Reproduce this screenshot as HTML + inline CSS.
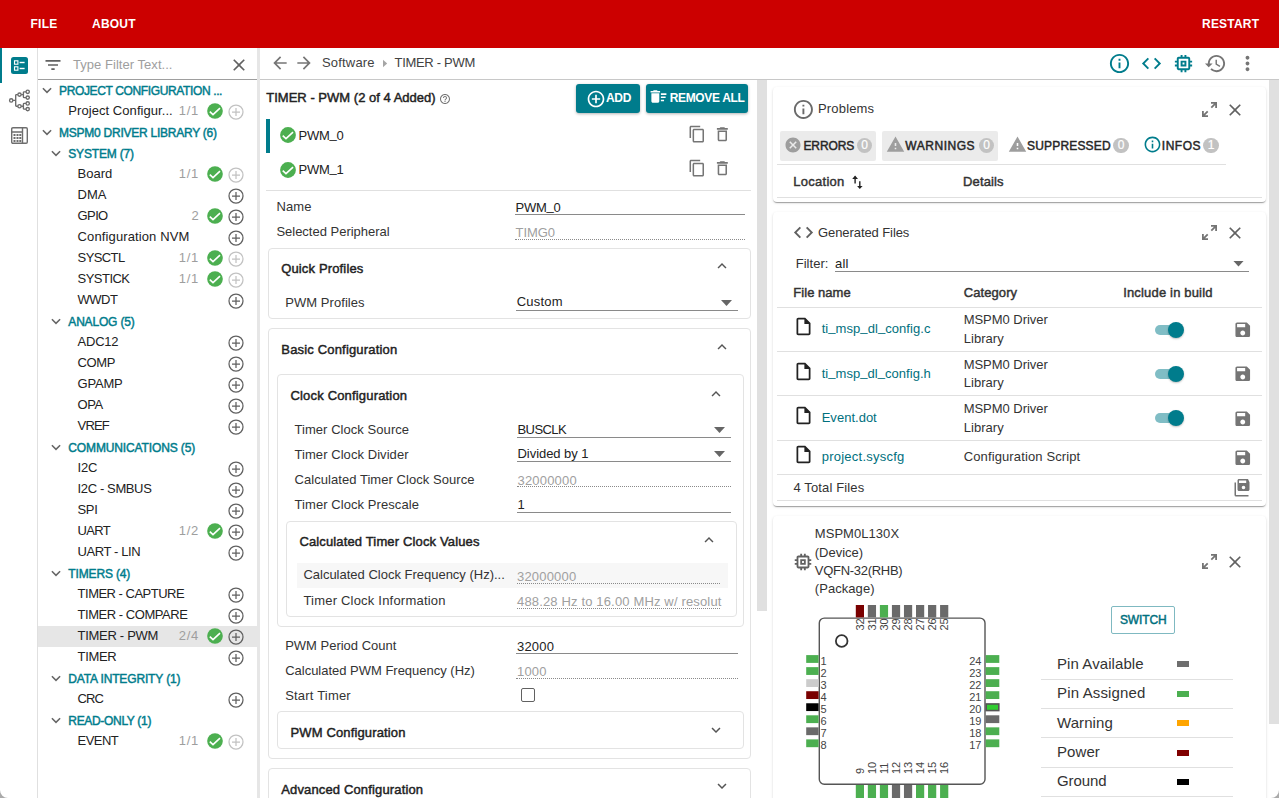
<!DOCTYPE html><html><head><meta charset="utf-8"><style>
html,body{margin:0;padding:0}
body{width:1279px;height:798px;overflow:hidden;position:relative;background:#fff;font-family:"Liberation Sans",sans-serif}
.t{position:absolute;white-space:nowrap;line-height:1}
.b{position:absolute;box-sizing:border-box}
.i{position:absolute;overflow:visible}
</style></head><body>
<div class="b" style="left:0px;top:0px;width:1279px;height:48px;background:#cc0000"></div>
<div class="t" style="left:30.5px;top:17.64px;font-size:12px;color:#fff;font-weight:700;letter-spacing:0.250px;">FILE</div>
<div class="t" style="left:92px;top:17.64px;font-size:12px;color:#fff;font-weight:700;letter-spacing:0.227px;">ABOUT</div>
<div class="t" style="left:1202px;top:17.64px;font-size:12px;color:#fff;font-weight:700;letter-spacing:0.218px;">RESTART</div>
<div class="b" style="left:37px;top:48px;width:1px;height:750px;background:#e0e0e0"></div>
<div class="b" style="left:0px;top:48px;width:2px;height:35px;background:#007c8c"></div>
<svg class="i" style="left:11px;top:57px;width:17px;height:17px" viewBox="0 0 17 17"><rect x="0" y="0" width="17" height="17" rx="2.5" fill="#007c8c"/><rect x="3.5" y="3.8" width="3.4" height="3.4" fill="none" stroke="#fff" stroke-width="1.1"/><rect x="3.5" y="9.8" width="3.4" height="3.4" fill="none" stroke="#fff" stroke-width="1.1"/><rect x="8.6" y="4.8" width="5" height="1.4" fill="#fff"/><rect x="8.6" y="10.8" width="5" height="1.4" fill="#fff"/></svg>
<svg class="i" style="left:9px;top:89px;width:22px;height:23px" viewBox="0 0 22 23" fill="none" stroke="#6a6a6a" stroke-width="1.35"><circle cx="2.2" cy="11.4" r="1.65"/><circle cx="10.5" cy="5.6" r="1.65"/><circle cx="10.5" cy="17.2" r="1.65"/><circle cx="18.7" cy="2.8" r="1.65"/><circle cx="18.7" cy="8.6" r="1.65"/><circle cx="18.7" cy="14.4" r="1.65"/><circle cx="18.7" cy="20.1" r="1.65"/><path d="M3.85 11.4H6.7M6.7 6.3V16.5Q6.7 17.2 7.4 17.2H8.85M6.7 6.3Q6.7 5.6 7.4 5.6H8.85M12.15 5.6H14.4M14.4 3.5V7.9Q14.4 8.6 15.1 8.6H17.05M14.4 3.5Q14.4 2.8 15.1 2.8H17.05M12.15 17.2H14.4M14.4 15.1V19.4Q14.4 20.1 15.1 20.1H17.05M14.4 15.1Q14.4 14.4 15.1 14.4H17.05"/></svg>
<svg class="i" style="left:11px;top:127px;width:17px;height:17px" viewBox="0 0 17 17" fill="none" stroke="#6e6e6e" stroke-width="1.4"><rect x="0.7" y="0.7" width="15.6" height="15.6" rx="1.2"/><path d="M11.5 0.7v15.6M1 5h10.5"/><g fill="#6e6e6e" stroke="none"><rect x="2.5" y="7" width="2" height="2"/><rect x="5.5" y="7" width="2" height="2"/><rect x="8.3" y="7" width="2" height="2"/><rect x="2.5" y="10" width="2" height="2"/><rect x="5.5" y="10" width="2" height="2"/><rect x="8.3" y="10" width="2" height="2"/><rect x="2.5" y="13" width="2" height="2"/><rect x="5.5" y="13" width="2" height="2"/><rect x="8.3" y="13" width="2" height="2"/></g></svg>
<svg class="i" style="left:43px;top:54.5px;width:20px;height:20px" viewBox="0 0 24 24"><path fill="#616161" d="M10 18h4v-2h-4v2zM3 6v2h18V6H3zm3 7h12v-2H6v2z"/></svg>
<div class="t" style="left:73px;top:58.00px;font-size:13px;color:#9e9e9e;letter-spacing:0.039px;">Type Filter Text...</div>
<svg class="i" style="left:229px;top:55px;width:20px;height:20px" viewBox="0 0 24 24"><path fill="#616161" d="M19 6.41L17.590 5 12 10.59 6.41 5 5 6.41 10.59 12 5 17.59 6.41 19 12 13.41 17.59 19 19 17.59 13.41 12z"/></svg>
<div class="b" style="left:38px;top:79px;width:219px;height:1px;background:#9e9e9e"></div>
<div class="b" style="left:257px;top:48px;width:3px;height:750px;background:#e6e6e6"></div>
<svg class="i" style="left:40.6px;top:85px;width:12px;height:10px" viewBox="0 0 12 10"><path d="M1.9 3.3L6 7.4 10.1 3.3" fill="none" stroke="#666" stroke-width="1.55"/></svg>
<div class="t" style="left:59.0px;top:84.84px;font-size:12px;color:#007c8c;-webkit-text-stroke:0.45px #007c8c;letter-spacing:-0.366px;">PROJECT CONFIGURATION ...</div>
<div class="t" style="left:68.3px;top:104.00px;font-size:13px;color:#222;letter-spacing:0.060px;">Project Configur...</div>
<div class="t" style="left:178.70px;top:104.00px;font-size:13px;color:#9e9e9e;letter-spacing:0.742px;">1/1</div>
<svg class="i" style="left:204.9px;top:101.4px;width:20px;height:20px" viewBox="0 0 20 20"><circle cx="10" cy="10" r="7.8" fill="#4caf50"/><path d="M4.80 10.60L8.00 13.60 15.00 7.10" fill="none" stroke="#fff" stroke-width="1.6"/></svg>
<svg class="i" style="left:225.55px;top:101.65px;width:20px;height:20px" viewBox="0 0 20 20"><circle cx="10" cy="10" r="7.0" fill="none" stroke="#c2c2c2" stroke-width="1.25"/><path d="M6 10h8M10 6v8" fill="none" stroke="#c2c2c2" stroke-width="1.25"/></svg>
<svg class="i" style="left:40.6px;top:127px;width:12px;height:10px" viewBox="0 0 12 10"><path d="M1.9 3.3L6 7.4 10.1 3.3" fill="none" stroke="#666" stroke-width="1.55"/></svg>
<div class="t" style="left:59.0px;top:126.84px;font-size:12px;color:#007c8c;-webkit-text-stroke:0.45px #007c8c;letter-spacing:-0.243px;">MSPM0 DRIVER LIBRARY (6)</div>
<svg class="i" style="left:49.900000000000006px;top:148px;width:12px;height:10px" viewBox="0 0 12 10"><path d="M1.9 3.3L6 7.4 10.1 3.3" fill="none" stroke="#666" stroke-width="1.55"/></svg>
<div class="t" style="left:68.3px;top:147.84px;font-size:12px;color:#007c8c;-webkit-text-stroke:0.45px #007c8c;letter-spacing:-0.180px;">SYSTEM (7)</div>
<div class="t" style="left:77.6px;top:167.00px;font-size:13px;color:#222;letter-spacing:0.012px;">Board</div>
<div class="t" style="left:178.70px;top:167.00px;font-size:13px;color:#9e9e9e;letter-spacing:0.742px;">1/1</div>
<svg class="i" style="left:204.9px;top:164.4px;width:20px;height:20px" viewBox="0 0 20 20"><circle cx="10" cy="10" r="7.8" fill="#4caf50"/><path d="M4.80 10.60L8.00 13.60 15.00 7.10" fill="none" stroke="#fff" stroke-width="1.6"/></svg>
<svg class="i" style="left:225.55px;top:164.65px;width:20px;height:20px" viewBox="0 0 20 20"><circle cx="10" cy="10" r="7.0" fill="none" stroke="#c2c2c2" stroke-width="1.25"/><path d="M6 10h8M10 6v8" fill="none" stroke="#c2c2c2" stroke-width="1.25"/></svg>
<div class="t" style="left:77.6px;top:188.00px;font-size:13px;color:#222;letter-spacing:0.014px;">DMA</div>
<svg class="i" style="left:225.55px;top:185.65px;width:20px;height:20px" viewBox="0 0 20 20"><circle cx="10" cy="10" r="7.0" fill="none" stroke="#606060" stroke-width="1.25"/><path d="M6 10h8M10 6v8" fill="none" stroke="#606060" stroke-width="1.25"/></svg>
<div class="t" style="left:77.6px;top:209.00px;font-size:13px;color:#222;letter-spacing:-0.624px;">GPIO</div>
<div class="t" style="left:191.58px;top:209.00px;font-size:13px;color:#9e9e9e;letter-spacing:0.193px;">2</div>
<svg class="i" style="left:204.9px;top:206.4px;width:20px;height:20px" viewBox="0 0 20 20"><circle cx="10" cy="10" r="7.8" fill="#4caf50"/><path d="M4.80 10.60L8.00 13.60 15.00 7.10" fill="none" stroke="#fff" stroke-width="1.6"/></svg>
<svg class="i" style="left:225.55px;top:206.65px;width:20px;height:20px" viewBox="0 0 20 20"><circle cx="10" cy="10" r="7.0" fill="none" stroke="#606060" stroke-width="1.25"/><path d="M6 10h8M10 6v8" fill="none" stroke="#606060" stroke-width="1.25"/></svg>
<div class="t" style="left:77.6px;top:230.00px;font-size:13px;color:#222;letter-spacing:0.119px;">Configuration NVM</div>
<svg class="i" style="left:225.55px;top:227.65px;width:20px;height:20px" viewBox="0 0 20 20"><circle cx="10" cy="10" r="7.0" fill="none" stroke="#606060" stroke-width="1.25"/><path d="M6 10h8M10 6v8" fill="none" stroke="#606060" stroke-width="1.25"/></svg>
<div class="t" style="left:77.6px;top:251.00px;font-size:13px;color:#222;letter-spacing:-0.609px;">SYSCTL</div>
<div class="t" style="left:178.70px;top:251.00px;font-size:13px;color:#9e9e9e;letter-spacing:0.742px;">1/1</div>
<svg class="i" style="left:204.9px;top:248.39999999999998px;width:20px;height:20px" viewBox="0 0 20 20"><circle cx="10" cy="10" r="7.8" fill="#4caf50"/><path d="M4.80 10.60L8.00 13.60 15.00 7.10" fill="none" stroke="#fff" stroke-width="1.6"/></svg>
<svg class="i" style="left:225.55px;top:248.64999999999998px;width:20px;height:20px" viewBox="0 0 20 20"><circle cx="10" cy="10" r="7.0" fill="none" stroke="#c2c2c2" stroke-width="1.25"/><path d="M6 10h8M10 6v8" fill="none" stroke="#c2c2c2" stroke-width="1.25"/></svg>
<div class="t" style="left:77.6px;top:272.00px;font-size:13px;color:#222;letter-spacing:-0.536px;">SYSTICK</div>
<div class="t" style="left:178.70px;top:272.00px;font-size:13px;color:#9e9e9e;letter-spacing:0.742px;">1/1</div>
<svg class="i" style="left:204.9px;top:269.4px;width:20px;height:20px" viewBox="0 0 20 20"><circle cx="10" cy="10" r="7.8" fill="#4caf50"/><path d="M4.80 10.60L8.00 13.60 15.00 7.10" fill="none" stroke="#fff" stroke-width="1.6"/></svg>
<svg class="i" style="left:225.55px;top:269.65px;width:20px;height:20px" viewBox="0 0 20 20"><circle cx="10" cy="10" r="7.0" fill="none" stroke="#c2c2c2" stroke-width="1.25"/><path d="M6 10h8M10 6v8" fill="none" stroke="#c2c2c2" stroke-width="1.25"/></svg>
<div class="t" style="left:77.6px;top:293.00px;font-size:13px;color:#222;letter-spacing:-0.515px;">WWDT</div>
<svg class="i" style="left:225.55px;top:290.65px;width:20px;height:20px" viewBox="0 0 20 20"><circle cx="10" cy="10" r="7.0" fill="none" stroke="#606060" stroke-width="1.25"/><path d="M6 10h8M10 6v8" fill="none" stroke="#606060" stroke-width="1.25"/></svg>
<svg class="i" style="left:49.900000000000006px;top:316px;width:12px;height:10px" viewBox="0 0 12 10"><path d="M1.9 3.3L6 7.4 10.1 3.3" fill="none" stroke="#666" stroke-width="1.55"/></svg>
<div class="t" style="left:68.3px;top:315.84px;font-size:12px;color:#007c8c;-webkit-text-stroke:0.45px #007c8c;letter-spacing:-0.174px;">ANALOG (5)</div>
<div class="t" style="left:77.6px;top:335.00px;font-size:13px;color:#222;letter-spacing:-0.236px;">ADC12</div>
<svg class="i" style="left:225.55px;top:332.65px;width:20px;height:20px" viewBox="0 0 20 20"><circle cx="10" cy="10" r="7.0" fill="none" stroke="#606060" stroke-width="1.25"/><path d="M6 10h8M10 6v8" fill="none" stroke="#606060" stroke-width="1.25"/></svg>
<div class="t" style="left:77.6px;top:356.00px;font-size:13px;color:#222;letter-spacing:-0.363px;">COMP</div>
<svg class="i" style="left:225.55px;top:353.65px;width:20px;height:20px" viewBox="0 0 20 20"><circle cx="10" cy="10" r="7.0" fill="none" stroke="#606060" stroke-width="1.25"/><path d="M6 10h8M10 6v8" fill="none" stroke="#606060" stroke-width="1.25"/></svg>
<div class="t" style="left:77.6px;top:377.00px;font-size:13px;color:#222;letter-spacing:-0.214px;">GPAMP</div>
<svg class="i" style="left:225.55px;top:374.65px;width:20px;height:20px" viewBox="0 0 20 20"><circle cx="10" cy="10" r="7.0" fill="none" stroke="#606060" stroke-width="1.25"/><path d="M6 10h8M10 6v8" fill="none" stroke="#606060" stroke-width="1.25"/></svg>
<div class="t" style="left:77.6px;top:398.00px;font-size:13px;color:#222;letter-spacing:-0.448px;">OPA</div>
<svg class="i" style="left:225.55px;top:395.65px;width:20px;height:20px" viewBox="0 0 20 20"><circle cx="10" cy="10" r="7.0" fill="none" stroke="#606060" stroke-width="1.25"/><path d="M6 10h8M10 6v8" fill="none" stroke="#606060" stroke-width="1.25"/></svg>
<div class="t" style="left:77.6px;top:419.00px;font-size:13px;color:#222;letter-spacing:-0.828px;">VREF</div>
<svg class="i" style="left:225.55px;top:416.65px;width:20px;height:20px" viewBox="0 0 20 20"><circle cx="10" cy="10" r="7.0" fill="none" stroke="#606060" stroke-width="1.25"/><path d="M6 10h8M10 6v8" fill="none" stroke="#606060" stroke-width="1.25"/></svg>
<svg class="i" style="left:49.900000000000006px;top:442px;width:12px;height:10px" viewBox="0 0 12 10"><path d="M1.9 3.3L6 7.4 10.1 3.3" fill="none" stroke="#666" stroke-width="1.55"/></svg>
<div class="t" style="left:68.3px;top:441.84px;font-size:12px;color:#007c8c;-webkit-text-stroke:0.45px #007c8c;letter-spacing:-0.127px;">COMMUNICATIONS (5)</div>
<div class="t" style="left:77.6px;top:461.00px;font-size:13px;color:#222;letter-spacing:-0.206px;">I2C</div>
<svg class="i" style="left:225.55px;top:458.65px;width:20px;height:20px" viewBox="0 0 20 20"><circle cx="10" cy="10" r="7.0" fill="none" stroke="#606060" stroke-width="1.25"/><path d="M6 10h8M10 6v8" fill="none" stroke="#606060" stroke-width="1.25"/></svg>
<div class="t" style="left:77.6px;top:482.00px;font-size:13px;color:#222;letter-spacing:-0.381px;">I2C - SMBUS</div>
<svg class="i" style="left:225.55px;top:479.65px;width:20px;height:20px" viewBox="0 0 20 20"><circle cx="10" cy="10" r="7.0" fill="none" stroke="#606060" stroke-width="1.25"/><path d="M6 10h8M10 6v8" fill="none" stroke="#606060" stroke-width="1.25"/></svg>
<div class="t" style="left:77.6px;top:503.00px;font-size:13px;color:#222;letter-spacing:-0.395px;">SPI</div>
<svg class="i" style="left:225.55px;top:500.65px;width:20px;height:20px" viewBox="0 0 20 20"><circle cx="10" cy="10" r="7.0" fill="none" stroke="#606060" stroke-width="1.25"/><path d="M6 10h8M10 6v8" fill="none" stroke="#606060" stroke-width="1.25"/></svg>
<div class="t" style="left:77.6px;top:524.00px;font-size:13px;color:#222;letter-spacing:-0.653px;">UART</div>
<div class="t" style="left:178.70px;top:524.00px;font-size:13px;color:#9e9e9e;letter-spacing:0.742px;">1/2</div>
<svg class="i" style="left:204.9px;top:521.4px;width:20px;height:20px" viewBox="0 0 20 20"><circle cx="10" cy="10" r="7.8" fill="#4caf50"/><path d="M4.80 10.60L8.00 13.60 15.00 7.10" fill="none" stroke="#fff" stroke-width="1.6"/></svg>
<svg class="i" style="left:225.55px;top:521.65px;width:20px;height:20px" viewBox="0 0 20 20"><circle cx="10" cy="10" r="7.0" fill="none" stroke="#606060" stroke-width="1.25"/><path d="M6 10h8M10 6v8" fill="none" stroke="#606060" stroke-width="1.25"/></svg>
<div class="t" style="left:77.6px;top:545.00px;font-size:13px;color:#222;letter-spacing:-0.408px;">UART - LIN</div>
<svg class="i" style="left:225.55px;top:542.65px;width:20px;height:20px" viewBox="0 0 20 20"><circle cx="10" cy="10" r="7.0" fill="none" stroke="#606060" stroke-width="1.25"/><path d="M6 10h8M10 6v8" fill="none" stroke="#606060" stroke-width="1.25"/></svg>
<svg class="i" style="left:49.900000000000006px;top:568px;width:12px;height:10px" viewBox="0 0 12 10"><path d="M1.9 3.3L6 7.4 10.1 3.3" fill="none" stroke="#666" stroke-width="1.55"/></svg>
<div class="t" style="left:68.3px;top:567.84px;font-size:12px;color:#007c8c;-webkit-text-stroke:0.45px #007c8c;letter-spacing:-0.140px;">TIMERS (4)</div>
<div class="t" style="left:77.6px;top:587.00px;font-size:13px;color:#222;letter-spacing:-0.508px;">TIMER - CAPTURE</div>
<svg class="i" style="left:225.55px;top:584.65px;width:20px;height:20px" viewBox="0 0 20 20"><circle cx="10" cy="10" r="7.0" fill="none" stroke="#606060" stroke-width="1.25"/><path d="M6 10h8M10 6v8" fill="none" stroke="#606060" stroke-width="1.25"/></svg>
<div class="t" style="left:77.6px;top:608.00px;font-size:13px;color:#222;letter-spacing:-0.465px;">TIMER - COMPARE</div>
<svg class="i" style="left:225.55px;top:605.65px;width:20px;height:20px" viewBox="0 0 20 20"><circle cx="10" cy="10" r="7.0" fill="none" stroke="#606060" stroke-width="1.25"/><path d="M6 10h8M10 6v8" fill="none" stroke="#606060" stroke-width="1.25"/></svg>
<div class="b" style="left:38px;top:626px;width:219px;height:21px;background:#e6e6e6"></div>
<div class="t" style="left:77.6px;top:629.00px;font-size:13px;color:#222;letter-spacing:-0.302px;">TIMER - PWM</div>
<div class="t" style="left:178.70px;top:629.00px;font-size:13px;color:#9e9e9e;letter-spacing:0.742px;">2/4</div>
<svg class="i" style="left:204.9px;top:626.4px;width:20px;height:20px" viewBox="0 0 20 20"><circle cx="10" cy="10" r="7.8" fill="#4caf50"/><path d="M4.80 10.60L8.00 13.60 15.00 7.10" fill="none" stroke="#fff" stroke-width="1.6"/></svg>
<svg class="i" style="left:225.55px;top:626.65px;width:20px;height:20px" viewBox="0 0 20 20"><circle cx="10" cy="10" r="7.0" fill="none" stroke="#606060" stroke-width="1.25"/><path d="M6 10h8M10 6v8" fill="none" stroke="#606060" stroke-width="1.25"/></svg>
<div class="t" style="left:77.6px;top:650.00px;font-size:13px;color:#222;letter-spacing:-0.358px;">TIMER</div>
<svg class="i" style="left:225.55px;top:647.65px;width:20px;height:20px" viewBox="0 0 20 20"><circle cx="10" cy="10" r="7.0" fill="none" stroke="#606060" stroke-width="1.25"/><path d="M6 10h8M10 6v8" fill="none" stroke="#606060" stroke-width="1.25"/></svg>
<svg class="i" style="left:49.900000000000006px;top:673px;width:12px;height:10px" viewBox="0 0 12 10"><path d="M1.9 3.3L6 7.4 10.1 3.3" fill="none" stroke="#666" stroke-width="1.55"/></svg>
<div class="t" style="left:68.3px;top:672.84px;font-size:12px;color:#007c8c;-webkit-text-stroke:0.45px #007c8c;letter-spacing:-0.145px;">DATA INTEGRITY (1)</div>
<div class="t" style="left:77.6px;top:692.00px;font-size:13px;color:#222;letter-spacing:-0.944px;">CRC</div>
<svg class="i" style="left:225.55px;top:689.65px;width:20px;height:20px" viewBox="0 0 20 20"><circle cx="10" cy="10" r="7.0" fill="none" stroke="#606060" stroke-width="1.25"/><path d="M6 10h8M10 6v8" fill="none" stroke="#606060" stroke-width="1.25"/></svg>
<svg class="i" style="left:49.900000000000006px;top:715px;width:12px;height:10px" viewBox="0 0 12 10"><path d="M1.9 3.3L6 7.4 10.1 3.3" fill="none" stroke="#666" stroke-width="1.55"/></svg>
<div class="t" style="left:68.3px;top:714.84px;font-size:12px;color:#007c8c;-webkit-text-stroke:0.45px #007c8c;letter-spacing:-0.319px;">READ-ONLY (1)</div>
<div class="t" style="left:77.6px;top:734.00px;font-size:13px;color:#222;letter-spacing:-0.560px;">EVENT</div>
<div class="t" style="left:178.70px;top:734.00px;font-size:13px;color:#9e9e9e;letter-spacing:0.742px;">1/1</div>
<svg class="i" style="left:204.9px;top:731.4px;width:20px;height:20px" viewBox="0 0 20 20"><circle cx="10" cy="10" r="7.8" fill="#4caf50"/><path d="M4.80 10.60L8.00 13.60 15.00 7.10" fill="none" stroke="#fff" stroke-width="1.6"/></svg>
<svg class="i" style="left:225.55px;top:731.65px;width:20px;height:20px" viewBox="0 0 20 20"><circle cx="10" cy="10" r="7.0" fill="none" stroke="#c2c2c2" stroke-width="1.25"/><path d="M6 10h8M10 6v8" fill="none" stroke="#c2c2c2" stroke-width="1.25"/></svg>
<div class="b" style="left:260px;top:79px;width:1019px;height:1px;background:#c8c8c8"></div>
<svg class="i" style="left:270px;top:53px;width:20px;height:20px" viewBox="0 0 24 24"><path fill="#757575" d="M20 11H7.83l5.59-5.59L12 4l-8 8 8 8 1.41-1.41L7.83 13H20v-2z"/></svg>
<svg class="i" style="left:294px;top:53px;width:20px;height:20px" viewBox="0 0 24 24"><path fill="#757575" d="M12 4l-1.41 1.41L16.17 11H4v2h12.170l-5.58 5.590L12 20l8-8z"/></svg>
<div class="t" style="left:322px;top:55.80px;font-size:13px;color:#424242;letter-spacing:0.182px;">Software</div>
<svg class="i" style="left:382px;top:59px;width:6px;height:9px" viewBox="382 59 6 9"><path fill="#a6a6a6" d="M383 59.7L387.2 63.45 383 67.2z"/></svg>
<div class="t" style="left:394.5px;top:55.80px;font-size:13px;color:#424242;letter-spacing:-0.302px;">TIMER - PWM</div>
<svg class="i" style="left:1108px;top:52px;width:23px;height:23px" viewBox="0 0 24 24"><path fill="#007c8c" d="M11 7h2v2h-2zm0 4h2v6h-2zm1-9C6.48 2 2 6.48 2 12s4.48 10 10 10 10-4.48 10-10S17.52 2 12 2zm0 18c-4.41 0-8-3.59-8-8s3.59-8 8-8 8 3.59 8 8-3.59 8-8 8z"/></svg>
<svg class="i" style="left:1140px;top:52px;width:23px;height:23px" viewBox="0 0 24 24"><path fill="#007c8c" d="M9.4 16.6L4.8 12l4.6-4.6L8 6l-6 6 6 6 1.4-1.4zm5.2 0l4.6-4.6-4.6-4.6L16 6l6 6-6 6-1.4-1.4z"/></svg>
<svg class="i" style="left:1172px;top:52px;width:23px;height:23px" viewBox="0 0 24 24"><path fill="#007c8c" d="M15 9H9v6h6V9zm-2 4h-2v-2h2v2zm8-2V9h-2V7c0-1.1-.9-2-2-2h-2V3h-2v2h-2V3H9v2H7c-1.1 0-2 .9-2 2v2H3v2h2v2H3v2h2v2c0 1.1.9 2 2 2h2v2h2v-2h2v2h2v-2h2c1.1 0 2-.9 2-2v-2h2v-2h-2v-2h2zm-4 6H7V7h10v10z"/></svg>
<svg class="i" style="left:1204px;top:52px;width:23px;height:23px" viewBox="0 0 24 24"><path fill="#757575" d="M13 3c-4.97 0-9 4.03-9 9H1l3.89 3.89.07.14L9 12H6c0-3.870 3.13-7 7-7s7 3.13 7 7-3.13 7-7 7c-1.93 0-3.68-.79-4.94-2.06l-1.42 1.42C8.27 19.99 10.51 21 13 21c4.97 0 9-4.03 9-9s-4.03-9-9-9zm-1 5v5l4.28 2.54.72-1.21-3.5-2.08V8H12z"/></svg>
<svg class="i" style="left:1236px;top:52px;width:23px;height:23px" viewBox="0 0 24 24"><path fill="#757575" d="M12 8c1.1 0 2-.9 2-2s-.9-2-2-2-2 .9-2 2 .9 2 2 2zm0 2c-1.1 0-2 .9-2 2s.9 2 2 2 2-.9 2-2-.9-2-2-2zm0 6c-1.1 0-2 .9-2 2s.9 2 2 2 2-.9 2-2-.9-2-2-2z"/></svg>
<div class="b" style="left:757px;top:80px;width:10px;height:531px;background:#e0e0e0"></div>
<div class="b" style="left:1269px;top:80px;width:10px;height:644px;background:#e0e0e0"></div>
<div class="t" style="left:266.25px;top:90.50px;font-size:13px;color:#222;-webkit-text-stroke:0.45px #222;letter-spacing:0.015px;">TIMER - PWM (2 of 4 Added)</div>
<svg class="i" style="left:439px;top:93px;width:12px;height:12px" viewBox="0 0 24 24"><path fill="#757575" d="M11 18h2v-2h-2v2zm1-16C6.48 2 2 6.48 2 12s4.48 10 10 10 10-4.48 10-10S17.52 2 12 2zm0 18c-4.41 0-8-3.59-8-8s3.59-8 8-8 8 3.59 8 8-3.59 8-8 8zm0-14c-2.21 0-4 1.79-4 4h2c0-1.1.9-2 2-2s2 .9 2 2c0 2-3 1.75-3 5h2c0-2.25 3-2.5 3-5 0-2.21-1.79-4-4-4z"/></svg>
<div class="b" style="left:576px;top:84px;width:64px;height:29px;background:#007c8c;border-radius:3px;box-shadow:0 1px 3px rgba(0,0,0,.3)"></div>
<div class="b" style="left:646px;top:84px;width:102px;height:29px;background:#007c8c;border-radius:3px;box-shadow:0 1px 3px rgba(0,0,0,.3)"></div>
<svg class="i" style="left:585.5px;top:88.5px;width:20px;height:20px" viewBox="0 0 24 24"><path fill="#fff" d="M13 7h-2v4H7v2h4v4h2v-4h4v-2h-4V7zm-1-5C6.48 2 2 6.48 2 12s4.48 10 10 10 10-4.48 10-10S17.52 2 12 2zm0 18c-4.41 0-8-3.59-8-8s3.59-8 8-8 8 3.59 8 8-3.59 8-8 8z"/></svg>
<div class="t" style="left:606px;top:91.64px;font-size:12px;color:#fff;font-weight:700;letter-spacing:-0.333px;">ADD</div>
<svg class="i" style="left:648.5px;top:87px;width:19px;height:19px" viewBox="0 0 24 24"><path fill="#fff" d="M15 16h4v2h-4zm0-8h7v2h-7zm0 4h6v2h-6zM3 18c0 1.1.9 2 2 2h6c1.1 0 2-.9 2-2V8H3v10zM14 5h-3l-1-1H6L5 5H2v2h12z"/></svg>
<div class="t" style="left:669.7px;top:91.64px;font-size:12px;color:#fff;font-weight:700;letter-spacing:-0.342px;">REMOVE ALL</div>
<div class="b" style="left:266px;top:119px;width:4px;height:34px;background:#007c8c"></div>
<svg class="i" style="left:278.4px;top:125.30000000000001px;width:20px;height:20px" viewBox="0 0 20 20"><circle cx="10" cy="10" r="7.9" fill="#4caf50"/><path d="M4.73 10.61L7.97 13.65 15.06 7.06" fill="none" stroke="#fff" stroke-width="1.6"/></svg>
<div class="t" style="left:298.5px;top:128.90px;font-size:13px;color:#222;letter-spacing:-0.253px;">PWM<span style="position:relative;top:-1.8px">_</span>0</div>
<svg class="i" style="left:688.2px;top:125.2px;width:18.3px;height:18.3px" viewBox="0 0 24 24"><path fill="#757575" d="M16 1H4c-1.1 0-2 .9-2 2v14h2V3h12V1zm3 4H8c-1.1 0-2 .9-2 2v14c0 1.1.9 2 2 2h11c1.1 0 2-.9 2-2V7c0-1.1-.9-2-2-2zm0 16H8V7h11v14z"/></svg>
<svg class="i" style="left:712.9px;top:125.2px;width:18.7px;height:18.7px" viewBox="0 0 24 24"><path fill="#757575" d="M6 19c0 1.1.9 2 2 2h8c1.1 0 2-.9 2-2V7H6v12zM8 9h8v10H8V9zm7.5-5l-1-1h-5l-1 1H5v2h14V4z"/></svg>
<svg class="i" style="left:278.4px;top:160.0px;width:20px;height:20px" viewBox="0 0 20 20"><circle cx="10" cy="10" r="7.9" fill="#4caf50"/><path d="M4.73 10.61L7.97 13.65 15.06 7.06" fill="none" stroke="#fff" stroke-width="1.6"/></svg>
<div class="t" style="left:298.5px;top:162.90px;font-size:13px;color:#222;letter-spacing:-0.253px;">PWM<span style="position:relative;top:-1.8px">_</span>1</div>
<svg class="i" style="left:688.2px;top:159.2px;width:18.3px;height:18.3px" viewBox="0 0 24 24"><path fill="#757575" d="M16 1H4c-1.1 0-2 .9-2 2v14h2V3h12V1zm3 4H8c-1.1 0-2 .9-2 2v14c0 1.1.9 2 2 2h11c1.1 0 2-.9 2-2V7c0-1.1-.9-2-2-2zm0 16H8V7h11v14z"/></svg>
<svg class="i" style="left:712.9px;top:159.2px;width:18.7px;height:18.7px" viewBox="0 0 24 24"><path fill="#757575" d="M6 19c0 1.1.9 2 2 2h8c1.1 0 2-.9 2-2V7H6v12zM8 9h8v10H8V9zm7.5-5l-1-1h-5l-1 1H5v2h14V4z"/></svg>
<div class="b" style="left:266px;top:190px;width:485px;height:1px;background:#e0e0e0"></div>
<div class="t" style="left:276.4px;top:199.90px;font-size:13px;color:#333;letter-spacing:0.129px;">Name</div>
<div class="t" style="left:515.6px;top:201.00px;font-size:13px;color:#222;letter-spacing:-0.253px;">PWM<span style="position:relative;top:-1.8px">_</span>0</div>
<div class="b" style="left:515px;top:214px;width:230px;height:1px;background:#8a8a8a"></div>
<div class="t" style="left:276.4px;top:225.10px;font-size:13px;color:#333;letter-spacing:-0.009px;">Selected Peripheral</div>
<div class="t" style="left:515.6px;top:226.40px;font-size:13px;color:#a0a0a0;letter-spacing:-0.060px;">TIMG0</div>
<div class="b" style="left:515px;top:239px;width:230px;height:1px;border-bottom:1px dotted #8a8a8a"></div>
<div class="b" style="left:268px;top:248px;width:483px;height:71px;border:1px solid #e3e3e3;border-radius:4px"></div>
<div class="t" style="left:281.2px;top:262.00px;font-size:13px;color:#222;-webkit-text-stroke:0.45px #222;letter-spacing:0.148px;">Quick Profiles</div>
<svg class="i" style="left:712.5px;top:257px;width:18px;height:18px" viewBox="0 0 24 24"><path fill="#555" d="M12 8l-6 6 1.41 1.41L12 10.83l4.59 4.58L18 14z"/></svg>
<div class="t" style="left:285.2px;top:295.50px;font-size:13px;color:#333;letter-spacing:0.058px;">PWM Profiles</div>
<div class="t" style="left:516.7px;top:295.30px;font-size:13px;color:#222;letter-spacing:0.203px;">Custom</div>
<div class="b" style="left:516px;top:310px;width:222px;height:1px;background:#8a8a8a"></div>
<svg class="i" style="left:721px;top:299.5px;width:11px;height:6px" viewBox="0 0 11 6"><path fill="#666" d="M0 0h11L5.5 6z"/></svg>
<div class="b" style="left:268px;top:328px;width:483px;height:431px;border:1px solid #e3e3e3;border-radius:4px"></div>
<div class="t" style="left:281.3px;top:343.10px;font-size:13px;color:#222;-webkit-text-stroke:0.45px #222;letter-spacing:0.172px;">Basic Configuration</div>
<svg class="i" style="left:712.5px;top:338px;width:18px;height:18px" viewBox="0 0 24 24"><path fill="#555" d="M12 8l-6 6 1.41 1.41L12 10.83l4.59 4.58L18 14z"/></svg>
<div class="b" style="left:277px;top:374px;width:467px;height:253px;border:1px solid #e3e3e3;border-radius:4px"></div>
<div class="t" style="left:290.5px;top:389.30px;font-size:13px;color:#222;-webkit-text-stroke:0.45px #222;letter-spacing:0.173px;">Clock Configuration</div>
<svg class="i" style="left:706.5px;top:385px;width:18px;height:18px" viewBox="0 0 24 24"><path fill="#555" d="M12 8l-6 6 1.41 1.41L12 10.83l4.59 4.58L18 14z"/></svg>
<div class="t" style="left:294.5px;top:423.20px;font-size:13px;color:#333;letter-spacing:0.052px;">Timer Clock Source</div>
<div class="t" style="left:517.5px;top:422.50px;font-size:13px;color:#222;letter-spacing:-0.564px;">BUSCLK</div>
<div class="b" style="left:517px;top:437px;width:214px;height:1px;background:#8a8a8a"></div>
<svg class="i" style="left:714px;top:426.5px;width:11px;height:6px" viewBox="0 0 11 6"><path fill="#666" d="M0 0h11L5.5 6z"/></svg>
<div class="t" style="left:294.5px;top:448.00px;font-size:13px;color:#333;letter-spacing:0.061px;">Timer Clock Divider</div>
<div class="t" style="left:517.5px;top:446.70px;font-size:13px;color:#222;letter-spacing:-0.048px;">Divided by 1</div>
<div class="b" style="left:517px;top:461px;width:214px;height:1px;background:#8a8a8a"></div>
<svg class="i" style="left:714px;top:450.5px;width:11px;height:6px" viewBox="0 0 11 6"><path fill="#666" d="M0 0h11L5.5 6z"/></svg>
<div class="t" style="left:294.5px;top:473.00px;font-size:13px;color:#333;letter-spacing:0.052px;">Calculated Timer Clock Source</div>
<div class="t" style="left:517.5px;top:473.80px;font-size:13px;color:#a0a0a0;letter-spacing:0.193px;">32000000</div>
<div class="b" style="left:517px;top:486px;width:214px;height:1px;border-bottom:1px dotted #8a8a8a"></div>
<div class="t" style="left:294.5px;top:498.00px;font-size:13px;color:#333;letter-spacing:0.072px;">Timer Clock Prescale</div>
<div class="t" style="left:517.5px;top:498.40px;font-size:13px;color:#222;letter-spacing:0.193px;">1</div>
<div class="b" style="left:517px;top:512px;width:214px;height:1px;background:#8a8a8a"></div>
<div class="b" style="left:286px;top:521px;width:451px;height:96px;border:1px solid #e3e3e3;border-radius:4px"></div>
<div class="t" style="left:299.4px;top:534.50px;font-size:13px;color:#222;-webkit-text-stroke:0.45px #222;letter-spacing:0.142px;">Calculated Timer Clock Values</div>
<svg class="i" style="left:699.5px;top:531px;width:18px;height:18px" viewBox="0 0 24 24"><path fill="#555" d="M12 8l-6 6 1.41 1.41L12 10.83l4.59 4.58L18 14z"/></svg>
<div class="b" style="left:297px;top:563px;width:431px;height:25px;background:#f7f7f7"></div>
<div class="t" style="left:303.4px;top:568.40px;font-size:13px;color:#333;letter-spacing:-0.004px;">Calculated Clock Frequency (Hz)...</div>
<div class="t" style="left:517px;top:569.60px;font-size:13px;color:#a0a0a0;letter-spacing:0.193px;">32000000</div>
<div class="b" style="left:517px;top:583px;width:203px;height:1px;border-bottom:1px dotted #8a8a8a"></div>
<div class="t" style="left:303.4px;top:593.80px;font-size:13px;color:#333;letter-spacing:0.208px;">Timer Clock Information</div>
<div class="t" style="left:517px;top:595.00px;font-size:13px;color:#a0a0a0;letter-spacing:0.155px;">488.28 Hz to 16.00 MHz w/ resolut</div>
<div class="b" style="left:517px;top:608px;width:203px;height:1px;border-bottom:1px dotted #8a8a8a"></div>
<div class="t" style="left:285.2px;top:638.90px;font-size:13px;color:#333;letter-spacing:-0.011px;">PWM Period Count</div>
<div class="t" style="left:517px;top:640.00px;font-size:13px;color:#222;letter-spacing:0.193px;">32000</div>
<div class="b" style="left:516px;top:653px;width:222px;height:1px;background:#8a8a8a"></div>
<div class="t" style="left:285.2px;top:664.30px;font-size:13px;color:#333;letter-spacing:-0.013px;">Calculated PWM Frequency (Hz)</div>
<div class="t" style="left:517px;top:665.00px;font-size:13px;color:#a0a0a0;letter-spacing:0.193px;">1000</div>
<div class="b" style="left:516px;top:678px;width:222px;height:1px;border-bottom:1px dotted #8a8a8a"></div>
<div class="t" style="left:285.2px;top:689.30px;font-size:13px;color:#333;letter-spacing:0.189px;">Start Timer</div>
<div class="b" style="left:521.4px;top:688.3px;width:14px;height:14px;border:1.5px solid #616161;border-radius:2px"></div>
<div class="b" style="left:277px;top:711px;width:467px;height:38px;border:1px solid #e3e3e3;border-radius:4px"></div>
<div class="t" style="left:290.5px;top:726.00px;font-size:13px;color:#222;-webkit-text-stroke:0.45px #222;letter-spacing:0.139px;">PWM Configuration</div>
<svg class="i" style="left:706.5px;top:721px;width:18px;height:18px" viewBox="0 0 24 24"><path fill="#555" d="M16.59 8.59L12 13.17 7.41 8.59 6 10l6 6 6-6z"/></svg>
<div class="b" style="left:268px;top:768px;width:483px;height:52px;border:1px solid #e3e3e3;border-radius:4px"></div>
<div class="t" style="left:281.2px;top:782.50px;font-size:13px;color:#222;-webkit-text-stroke:0.45px #222;letter-spacing:0.148px;">Advanced Configuration</div>
<svg class="i" style="left:712.5px;top:777px;width:18px;height:18px" viewBox="0 0 24 24"><path fill="#555" d="M16.59 8.59L12 13.17 7.41 8.59 6 10l6 6 6-6z"/></svg>
<div class="b" style="left:773px;top:87px;width:493px;height:115px;background:#fff;border-radius:4px;box-shadow:0 2px 1px -1px rgba(0,0,0,.2),0 1px 1px 0 rgba(0,0,0,.14),0 1px 3px 0 rgba(0,0,0,.12)"></div>
<svg class="i" style="left:792.2px;top:98px;width:22.8px;height:22.8px" viewBox="0 0 24 24"><path fill="#6a6a6a" d="M11 7h2v2h-2zm0 4h2v6h-2zm1-9C6.48 2 2 6.48 2 12s4.48 10 10 10 10-4.48 10-10S17.52 2 12 2zm0 18c-4.41 0-8-3.59-8-8s3.59-8 8-8 8 3.59 8 8-3.59 8-8 8z"/></svg>
<div class="t" style="left:818px;top:102.20px;font-size:13px;color:#333;letter-spacing:0.167px;">Problems</div>
<svg class="i" style="left:1201px;top:100.8px;width:17px;height:17px" viewBox="0 0 17 17"><path d="M10 1.9H15.1V7M15.1 1.9L10.3 6.7M1.9 10V15.1H7M1.9 15.1L6.7 10.3" fill="none" stroke="#757575" stroke-width="1.8"/></svg>
<svg class="i" style="left:1224.5px;top:99.5px;width:20px;height:20px" viewBox="0 0 24 24"><path fill="#616161" d="M19 6.41L17.590 5 12 10.59 6.41 5 5 6.41 10.59 12 5 17.59 6.41 19 12 13.41 17.59 19 19 17.59 13.41 12z"/></svg>
<div class="b" style="left:780px;top:131px;width:96px;height:30px;background:#ebebeb;border-radius:2px"></div>
<div class="b" style="left:882px;top:131px;width:116px;height:30px;background:#ebebeb;border-radius:2px"></div>
<svg class="i" style="left:784px;top:135.5px;width:18px;height:18px" viewBox="0 0 24 24"><path fill="#9e9e9e" d="M12 2C6.47 2 2 6.470 2 12s4.47 10 10 10 10-4.47 10-10S17.53 2 12 2zm5 13.59L15.59 17 12 13.41 8.41 17 7 15.59 10.59 12 7 8.41 8.41 7 12 10.59 15.59 7 17 8.41 13.41 12 17 15.59z"/></svg>
<div class="t" style="left:803.4px;top:139.54px;font-size:12px;color:#262626;-webkit-text-stroke:0.45px #262626;letter-spacing:-0.090px;">ERRORS</div>
<div class="t" style="left:856.80px;top:137.95px;width:15.4px;height:15.4px;border-radius:50%;background:#c2c2c2;color:#fff;font-size:12px;text-align:center;line-height:15.9px;-webkit-text-stroke:0.2px #fff">0</div>
<svg class="i" style="left:885.9px;top:135.1px;width:19px;height:19px" viewBox="0 0 24 24"><path fill="#9e9e9e" d="M1 21h22L12 2 1 21zm12-3h-2v-2h2v2zm0-4h-2v-4h2v4z"/></svg>
<div class="t" style="left:905.3px;top:139.54px;font-size:12px;color:#262626;-webkit-text-stroke:0.45px #262626;letter-spacing:0.530px;">WARNINGS</div>
<div class="t" style="left:978.80px;top:137.95px;width:15.4px;height:15.4px;border-radius:50%;background:#c2c2c2;color:#fff;font-size:12px;text-align:center;line-height:15.9px;-webkit-text-stroke:0.2px #fff">0</div>
<svg class="i" style="left:1007.7px;top:135.1px;width:19px;height:19px" viewBox="0 0 24 24"><path fill="#9e9e9e" d="M1 21h22L12 2 1 21zm12-3h-2v-2h2v2zm0-4h-2v-4h2v4z"/></svg>
<div class="t" style="left:1027px;top:139.54px;font-size:12px;color:#262626;-webkit-text-stroke:0.45px #262626;letter-spacing:0.177px;">SUPPRESSED</div>
<div class="t" style="left:1113.30px;top:137.95px;width:15.4px;height:15.4px;border-radius:50%;background:#c2c2c2;color:#fff;font-size:12px;text-align:center;line-height:15.9px;-webkit-text-stroke:0.2px #fff">0</div>
<svg class="i" style="left:1142.7px;top:135px;width:19px;height:19px" viewBox="0 0 24 24"><path fill="#007c8c" d="M11 7h2v2h-2zm0 4h2v6h-2zm1-9C6.48 2 2 6.48 2 12s4.48 10 10 10 10-4.48 10-10S17.52 2 12 2zm0 18c-4.41 0-8-3.59-8-8s3.59-8 8-8 8 3.59 8 8-3.59 8-8 8z"/></svg>
<div class="t" style="left:1161.8px;top:139.54px;font-size:12px;color:#262626;-webkit-text-stroke:0.45px #262626;letter-spacing:0.526px;">INFOS</div>
<div class="t" style="left:1203.30px;top:137.95px;width:15.4px;height:15.4px;border-radius:50%;background:#c2c2c2;color:#fff;font-size:12px;text-align:center;line-height:15.9px;-webkit-text-stroke:0.2px #fff">1</div>
<div class="b" style="left:777px;top:163.5px;width:449px;height:1px;background:#e0e0e0"></div>
<div class="t" style="left:793.3px;top:174.80px;font-size:13px;color:#333;-webkit-text-stroke:0.45px #333;letter-spacing:0.263px;">Location</div>
<svg class="i" style="left:850px;top:174px;width:14px;height:16px" viewBox="850 174 14 16"><path d="M855.1 176.8V183.6M859.8 181.2V187.9" stroke="#222" stroke-width="1.4" fill="none"/><path d="M852.2 178.9L855.1 175.6 858 178.9zM857.1 185.9L859.8 189.1 862.6 185.9z" fill="#222"/></svg>
<div class="t" style="left:963px;top:174.80px;font-size:13px;color:#333;-webkit-text-stroke:0.45px #333;letter-spacing:0.144px;">Details</div>
<div class="b" style="left:777px;top:197px;width:485px;height:1px;background:#e0e0e0"></div>
<div class="b" style="left:773px;top:212px;width:493px;height:294px;background:#fff;border-radius:4px;box-shadow:0 2px 1px -1px rgba(0,0,0,.2),0 1px 1px 0 rgba(0,0,0,.14),0 1px 3px 0 rgba(0,0,0,.12)"></div>
<svg class="i" style="left:792px;top:221.3px;width:23px;height:23px" viewBox="0 0 24 24"><path fill="#616161" d="M9.4 16.6L4.8 12l4.6-4.6L8 6l-6 6 6 6 1.4-1.4zm5.2 0l4.6-4.6-4.6-4.6L16 6l6 6-6 6-1.4-1.4z"/></svg>
<div class="t" style="left:818px;top:226.20px;font-size:13px;color:#333;letter-spacing:-0.080px;">Generated Files</div>
<svg class="i" style="left:1201px;top:224.3px;width:17px;height:17px" viewBox="0 0 17 17"><path d="M10 1.9H15.1V7M15.1 1.9L10.3 6.7M1.9 10V15.1H7M1.9 15.1L6.7 10.3" fill="none" stroke="#757575" stroke-width="1.8"/></svg>
<svg class="i" style="left:1224.5px;top:223px;width:20px;height:20px" viewBox="0 0 24 24"><path fill="#616161" d="M19 6.41L17.590 5 12 10.59 6.41 5 5 6.41 10.59 12 5 17.59 6.41 19 12 13.41 17.59 19 19 17.59 13.41 12z"/></svg>
<div class="t" style="left:795.7px;top:257.00px;font-size:13px;color:#333;letter-spacing:0.032px;">Filter:</div>
<div class="t" style="left:835px;top:257.00px;font-size:13px;color:#222;letter-spacing:0.200px;">all</div>
<div class="b" style="left:835px;top:271px;width:414px;height:1px;background:#8a8a8a"></div>
<svg class="i" style="left:1232.5px;top:260.5px;width:11px;height:5.5px" viewBox="0 0 11 6"><path fill="#666" d="M0 0h11L5.5 6z"/></svg>
<div class="t" style="left:793.3px;top:286.30px;font-size:13px;color:#333;-webkit-text-stroke:0.45px #333;letter-spacing:0.038px;">File name</div>
<div class="t" style="left:963.7px;top:286.30px;font-size:13px;color:#333;-webkit-text-stroke:0.45px #333;letter-spacing:0.088px;">Category</div>
<div class="t" style="left:1123.2px;top:286.30px;font-size:13px;color:#333;-webkit-text-stroke:0.45px #333;letter-spacing:0.170px;">Include in build</div>
<div class="b" style="left:777px;top:307px;width:485px;height:1px;background:#e0e0e0"></div>
<svg class="i" style="left:793.4px;top:315.95px;width:21px;height:21px" viewBox="0 0 24 24"><path fill="#222" d="M14 2H6c-1.1 0-1.99.9-1.99 2L4 20c0 1.1.89 2 1.99 2H18c1.1 0 2-.9 2-2V8l-6-6zM6 20V4h7v5h5v11H6z"/></svg>
<div class="t" style="left:821.7px;top:322.20px;font-size:13px;color:#00707e;letter-spacing:0.061px;">ti<span style="position:relative;top:-1.8px">_</span>msp<span style="position:relative;top:-1.8px">_</span>dl<span style="position:relative;top:-1.8px">_</span>config.c</div>
<div class="t" style="left:963.7px;top:313.40px;font-size:13px;color:#333;letter-spacing:-0.035px;">MSPM0 Driver</div>
<div class="t" style="left:963.7px;top:332.10px;font-size:13px;color:#333;letter-spacing:0.036px;">Library</div>
<div class="b" style="left:1155px;top:325px;width:24px;height:10px;background:#80bdc5;border-radius:5px"></div>
<div class="b" style="left:1168px;top:322px;width:16px;height:16px;border-radius:50%;background:#007c8c;box-shadow:0 1px 2px rgba(0,0,0,.25)"></div>
<svg class="i" style="left:1232.85px;top:320.15px;width:19.5px;height:19.5px" viewBox="0 0 24 24"><path fill="#757575" d="M17 3H5c-1.11 0-2 .9-2 2v14c0 1.1.89 2 2 2h14c1.1 0 2-.9 2-2V7l-4-4zm-5 16c-1.66 0-3-1.34-3-3s1.34-3 3-3 3 1.34 3 3-1.34 3-3 3zm3-10H5V5h10v4z"/></svg>
<svg class="i" style="left:793.4px;top:360.75px;width:21px;height:21px" viewBox="0 0 24 24"><path fill="#222" d="M14 2H6c-1.1 0-1.99.9-1.99 2L4 20c0 1.1.89 2 1.99 2H18c1.1 0 2-.9 2-2V8l-6-6zM6 20V4h7v5h5v11H6z"/></svg>
<div class="t" style="left:821.7px;top:367.00px;font-size:13px;color:#00707e;letter-spacing:0.040px;">ti<span style="position:relative;top:-1.8px">_</span>msp<span style="position:relative;top:-1.8px">_</span>dl<span style="position:relative;top:-1.8px">_</span>config.h</div>
<div class="t" style="left:963.7px;top:357.60px;font-size:13px;color:#333;letter-spacing:-0.035px;">MSPM0 Driver</div>
<div class="t" style="left:963.7px;top:376.30px;font-size:13px;color:#333;letter-spacing:0.036px;">Library</div>
<div class="b" style="left:1155px;top:368.9px;width:24px;height:10px;background:#80bdc5;border-radius:5px"></div>
<div class="b" style="left:1168px;top:365.9px;width:16px;height:16px;border-radius:50%;background:#007c8c;box-shadow:0 1px 2px rgba(0,0,0,.25)"></div>
<svg class="i" style="left:1232.85px;top:363.95px;width:19.5px;height:19.5px" viewBox="0 0 24 24"><path fill="#757575" d="M17 3H5c-1.11 0-2 .9-2 2v14c0 1.1.89 2 2 2h14c1.1 0 2-.9 2-2V7l-4-4zm-5 16c-1.66 0-3-1.34-3-3s1.34-3 3-3 3 1.34 3 3-1.34 3-3 3zm3-10H5V5h10v4z"/></svg>
<svg class="i" style="left:793.4px;top:404.75px;width:21px;height:21px" viewBox="0 0 24 24"><path fill="#222" d="M14 2H6c-1.1 0-1.99.9-1.99 2L4 20c0 1.1.89 2 1.99 2H18c1.1 0 2-.9 2-2V8l-6-6zM6 20V4h7v5h5v11H6z"/></svg>
<div class="t" style="left:821.7px;top:411.00px;font-size:13px;color:#00707e;letter-spacing:0.015px;">Event.dot</div>
<div class="t" style="left:963.7px;top:401.60px;font-size:13px;color:#333;letter-spacing:-0.035px;">MSPM0 Driver</div>
<div class="t" style="left:963.7px;top:420.50px;font-size:13px;color:#333;letter-spacing:0.036px;">Library</div>
<div class="b" style="left:1155px;top:412.9px;width:24px;height:10px;background:#80bdc5;border-radius:5px"></div>
<div class="b" style="left:1168px;top:409.9px;width:16px;height:16px;border-radius:50%;background:#007c8c;box-shadow:0 1px 2px rgba(0,0,0,.25)"></div>
<svg class="i" style="left:1232.85px;top:408.55px;width:19.5px;height:19.5px" viewBox="0 0 24 24"><path fill="#757575" d="M17 3H5c-1.11 0-2 .9-2 2v14c0 1.1.89 2 2 2h14c1.1 0 2-.9 2-2V7l-4-4zm-5 16c-1.66 0-3-1.34-3-3s1.34-3 3-3 3 1.34 3 3-1.34 3-3 3zm3-10H5V5h10v4z"/></svg>
<svg class="i" style="left:793.4px;top:443.75px;width:21px;height:21px" viewBox="0 0 24 24"><path fill="#222" d="M14 2H6c-1.1 0-1.99.9-1.99 2L4 20c0 1.1.89 2 1.99 2H18c1.1 0 2-.9 2-2V8l-6-6zM6 20V4h7v5h5v11H6z"/></svg>
<div class="t" style="left:821.7px;top:450.00px;font-size:13px;color:#00707e;letter-spacing:0.240px;">project.syscfg</div>
<div class="t" style="left:963.7px;top:450.00px;font-size:13px;color:#333;letter-spacing:0.125px;">Configuration Script</div>
<svg class="i" style="left:1232.85px;top:447.85px;width:19.5px;height:19.5px" viewBox="0 0 24 24"><path fill="#757575" d="M17 3H5c-1.11 0-2 .9-2 2v14c0 1.1.89 2 2 2h14c1.1 0 2-.9 2-2V7l-4-4zm-5 16c-1.66 0-3-1.34-3-3s1.34-3 3-3 3 1.34 3 3-1.34 3-3 3zm3-10H5V5h10v4z"/></svg>
<div class="b" style="left:777px;top:351px;width:485px;height:1px;background:#e0e0e0"></div>
<div class="b" style="left:777px;top:395px;width:485px;height:1px;background:#e0e0e0"></div>
<div class="b" style="left:777px;top:440px;width:485px;height:1px;background:#e0e0e0"></div>
<div class="b" style="left:777px;top:474px;width:485px;height:1px;background:#e0e0e0"></div>
<div class="b" style="left:777px;top:500px;width:485px;height:1px;background:#e0e0e0"></div>
<div class="t" style="left:793.5px;top:481.20px;font-size:13px;color:#333;letter-spacing:0.125px;">4 Total Files</div>
<svg class="i" style="left:1233px;top:478px;width:19px;height:19px" viewBox="0 0 19 19"><path fill="#757575" d="M1.5 4.5v12.5a1.5 1.5 0 0 0 1.5 1.5h12.5v-1.5H3V4.5z"/><path fill="#757575" d="M15 1H6c-.83 0-1.5.67-1.5 1.5v9c0 .83.67 1.5 1.5 1.5h9c.83 0 1.5-.67 1.5-1.5V4.2zM10.5 11.3a1.8 1.8 0 1 1 0-3.6 1.8 1.8 0 0 1 0 3.6zm2.7-6.3H6V2.6h7.2z"/></svg>
<div class="b" style="left:773px;top:516px;width:493px;height:300px;background:#fff;border-radius:4px;box-shadow:0 2px 1px -1px rgba(0,0,0,.2),0 1px 1px 0 rgba(0,0,0,.14),0 1px 3px 0 rgba(0,0,0,.12)"></div>
<svg class="i" style="left:791.5px;top:550.5px;width:22px;height:22px" viewBox="0 0 24 24"><path fill="#616161" d="M15 9H9v6h6V9zm-2 4h-2v-2h2v2zm8-2V9h-2V7c0-1.1-.9-2-2-2h-2V3h-2v2h-2V3H9v2H7c-1.1 0-2 .9-2 2v2H3v2h2v2H3v2h2v2c0 1.1.9 2 2 2h2v2h2v-2h2v2h2v-2h2c1.1 0 2-.9 2-2v-2h2v-2h-2v-2h2zm-4 6H7V7h10v10z"/></svg>
<div class="t" style="left:814.8px;top:526.70px;font-size:13px;color:#333;letter-spacing:0.051px;">MSPM0L130X</div>
<div class="t" style="left:814.8px;top:545.80px;font-size:13px;color:#333;letter-spacing:-0.020px;">(Device)</div>
<div class="t" style="left:814.8px;top:564.10px;font-size:13px;color:#333;letter-spacing:-0.288px;">VQFN-32(RHB)</div>
<div class="t" style="left:814.8px;top:582.30px;font-size:13px;color:#333;letter-spacing:0.059px;">(Package)</div>
<svg class="i" style="left:1201px;top:553.2px;width:17px;height:17px" viewBox="0 0 17 17"><path d="M10 1.9H15.1V7M15.1 1.9L10.3 6.7M1.9 10V15.1H7M1.9 15.1L6.7 10.3" fill="none" stroke="#757575" stroke-width="1.8"/></svg>
<svg class="i" style="left:1224.5px;top:552px;width:20px;height:20px" viewBox="0 0 24 24"><path fill="#616161" d="M19 6.41L17.590 5 12 10.59 6.41 5 5 6.41 10.59 12 5 17.59 6.41 19 12 13.41 17.59 19 19 17.59 13.41 12z"/></svg>
<div class="b" style="left:1111px;top:605.5px;width:64px;height:28px;border:1px solid #7fb9c1;border-radius:2px"></div>
<div class="t" style="left:1120px;top:613.64px;font-size:12px;color:#00707e;-webkit-text-stroke:0.45px #00707e;letter-spacing:-0.138px;">SWITCH</div>
<div class="t" style="left:1057px;top:655.70px;font-size:15px;color:#333;letter-spacing:0.083px;">Pin Available</div>
<div class="b" style="left:1177px;top:661.4px;width:12px;height:6px;background:#6e6e6e"></div>
<div class="b" style="left:1041px;top:679px;width:192px;height:1px;background:#e0e0e0"></div>
<div class="t" style="left:1057px;top:685.30px;font-size:15px;color:#333;letter-spacing:0.152px;">Pin Assigned</div>
<div class="b" style="left:1177px;top:691px;width:12px;height:6px;background:#4caf50"></div>
<div class="b" style="left:1041px;top:708.2px;width:192px;height:1px;background:#e0e0e0"></div>
<div class="t" style="left:1057px;top:714.60px;font-size:15px;color:#333;letter-spacing:0.075px;">Warning</div>
<div class="b" style="left:1177px;top:720.3px;width:12px;height:6px;background:#ffa500"></div>
<div class="b" style="left:1041px;top:737.3px;width:192px;height:1px;background:#e0e0e0"></div>
<div class="t" style="left:1057px;top:743.80px;font-size:15px;color:#333;letter-spacing:0.078px;">Power</div>
<div class="b" style="left:1177px;top:749.5px;width:12px;height:6px;background:#800000"></div>
<div class="b" style="left:1041px;top:767.4px;width:192px;height:1px;background:#e0e0e0"></div>
<div class="t" style="left:1057px;top:773.40px;font-size:15px;color:#333;letter-spacing:-0.089px;">Ground</div>
<div class="b" style="left:1177px;top:779.1px;width:12px;height:6px;background:#000"></div>
<div class="b" style="left:1041px;top:796.2px;width:192px;height:1px;background:#e0e0e0"></div>
<svg class="i" style="left:790px;top:595px;width:230px;height:210px" viewBox="790 595 230 210"><rect x="819.3" y="618.1" width="165.7" height="166.1" rx="5" fill="#fff" stroke="#555" stroke-width="1.4"/><circle cx="841.7" cy="641" r="5.8" fill="none" stroke="#333" stroke-width="1.8"/><rect x="855.8" y="605" width="8.2" height="12.4" fill="#7a0000"/><text transform="translate(863.8,630.5) rotate(-90)" font-size="11" fill="#444" font-family="Liberation Sans">32</text><rect x="867.8399999999999" y="605" width="8.2" height="12.4" fill="#6a6a6a"/><text transform="translate(875.8399999999999,630.5) rotate(-90)" font-size="11" fill="#444" font-family="Liberation Sans">31</text><rect x="879.88" y="605" width="8.2" height="12.4" fill="#4caf50"/><text transform="translate(887.88,630.5) rotate(-90)" font-size="11" fill="#444" font-family="Liberation Sans">30</text><rect x="891.92" y="605" width="8.2" height="12.4" fill="#6a6a6a"/><text transform="translate(899.92,630.5) rotate(-90)" font-size="11" fill="#444" font-family="Liberation Sans">29</text><rect x="903.9599999999999" y="605" width="8.2" height="12.4" fill="#6a6a6a"/><text transform="translate(911.9599999999999,630.5) rotate(-90)" font-size="11" fill="#444" font-family="Liberation Sans">28</text><rect x="916.0" y="605" width="8.2" height="12.4" fill="#6a6a6a"/><text transform="translate(924.0,630.5) rotate(-90)" font-size="11" fill="#444" font-family="Liberation Sans">27</text><rect x="928.04" y="605" width="8.2" height="12.4" fill="#6a6a6a"/><text transform="translate(936.04,630.5) rotate(-90)" font-size="11" fill="#444" font-family="Liberation Sans">26</text><rect x="940.0799999999999" y="605" width="8.2" height="12.4" fill="#6a6a6a"/><text transform="translate(948.0799999999999,630.5) rotate(-90)" font-size="11" fill="#444" font-family="Liberation Sans">25</text><rect x="806.2" y="655.1" width="12.4" height="7.8" fill="#4caf50"/><text x="820.4" y="664.7" font-size="11" fill="#444" font-family="Liberation Sans">1</text><rect x="806.2" y="667.14" width="12.4" height="7.8" fill="#4caf50"/><text x="820.4" y="676.74" font-size="11" fill="#444" font-family="Liberation Sans">2</text><rect x="806.2" y="679.1800000000001" width="12.4" height="7.8" fill="#cccccc"/><text x="820.4" y="688.7800000000001" font-size="11" fill="#444" font-family="Liberation Sans">3</text><rect x="806.2" y="691.22" width="12.4" height="7.8" fill="#7a0000"/><text x="820.4" y="700.82" font-size="11" fill="#444" font-family="Liberation Sans">4</text><rect x="806.2" y="703.26" width="12.4" height="7.8" fill="#000"/><text x="820.4" y="712.86" font-size="11" fill="#444" font-family="Liberation Sans">5</text><rect x="806.2" y="715.3000000000001" width="12.4" height="7.8" fill="#4caf50"/><text x="820.4" y="724.9000000000001" font-size="11" fill="#444" font-family="Liberation Sans">6</text><rect x="806.2" y="727.34" width="12.4" height="7.8" fill="#6a6a6a"/><text x="820.4" y="736.94" font-size="11" fill="#444" font-family="Liberation Sans">7</text><rect x="806.2" y="739.38" width="12.4" height="7.8" fill="#4caf50"/><text x="820.4" y="748.98" font-size="11" fill="#444" font-family="Liberation Sans">8</text><rect x="985.7" y="655.1" width="13.6" height="7.8" fill="#4caf50"/><text x="981.4" y="664.7" font-size="11" fill="#444" text-anchor="end" font-family="Liberation Sans">24</text><rect x="985.7" y="667.14" width="13.6" height="7.8" fill="#4caf50"/><text x="981.4" y="676.74" font-size="11" fill="#444" text-anchor="end" font-family="Liberation Sans">23</text><rect x="985.7" y="679.1800000000001" width="13.6" height="7.8" fill="#4caf50"/><text x="981.4" y="688.7800000000001" font-size="11" fill="#444" text-anchor="end" font-family="Liberation Sans">22</text><rect x="985.7" y="691.22" width="13.6" height="7.8" fill="#4caf50"/><text x="981.4" y="700.82" font-size="11" fill="#444" text-anchor="end" font-family="Liberation Sans">21</text><rect x="986.2" y="703.96" width="12.6" height="6.6" fill="#32cd32" stroke="#555" stroke-width="1.6"/><text x="981.4" y="712.86" font-size="11" fill="#444" text-anchor="end" font-family="Liberation Sans">20</text><rect x="985.7" y="715.3000000000001" width="13.6" height="7.8" fill="#6a6a6a"/><text x="981.4" y="724.9000000000001" font-size="11" fill="#444" text-anchor="end" font-family="Liberation Sans">19</text><rect x="985.7" y="727.34" width="13.6" height="7.8" fill="#4caf50"/><text x="981.4" y="736.94" font-size="11" fill="#444" text-anchor="end" font-family="Liberation Sans">18</text><rect x="985.7" y="739.38" width="13.6" height="7.8" fill="#4caf50"/><text x="981.4" y="748.98" font-size="11" fill="#444" text-anchor="end" font-family="Liberation Sans">17</text><rect x="855.8" y="785" width="8.2" height="14" fill="#4caf50"/><text transform="translate(863.8,774) rotate(-90)" font-size="11" fill="#444" font-family="Liberation Sans">9</text><rect x="867.8399999999999" y="785" width="8.2" height="14" fill="#4caf50"/><text transform="translate(875.8399999999999,774) rotate(-90)" font-size="11" fill="#444" font-family="Liberation Sans">10</text><rect x="879.88" y="785" width="8.2" height="14" fill="#4caf50"/><text transform="translate(887.88,774) rotate(-90)" font-size="11" fill="#444" font-family="Liberation Sans">11</text><rect x="891.92" y="785" width="8.2" height="14" fill="#6a6a6a"/><text transform="translate(899.92,774) rotate(-90)" font-size="11" fill="#444" font-family="Liberation Sans">12</text><rect x="903.9599999999999" y="785" width="8.2" height="14" fill="#6a6a6a"/><text transform="translate(911.9599999999999,774) rotate(-90)" font-size="11" fill="#444" font-family="Liberation Sans">13</text><rect x="916.0" y="785" width="8.2" height="14" fill="#4caf50"/><text transform="translate(924.0,774) rotate(-90)" font-size="11" fill="#444" font-family="Liberation Sans">14</text><rect x="928.04" y="785" width="8.2" height="14" fill="#4caf50"/><text transform="translate(936.04,774) rotate(-90)" font-size="11" fill="#444" font-family="Liberation Sans">15</text><rect x="940.0799999999999" y="785" width="8.2" height="14" fill="#4caf50"/><text transform="translate(948.0799999999999,774) rotate(-90)" font-size="11" fill="#444" font-family="Liberation Sans">16</text></svg>
<svg class="i" style="left:0;top:790px;width:8px;height:8px" viewBox="0 0 8 8"><path d="M0 0V8H8A8 8 0 0 1 0 0z" fill="#aaa"/></svg>
<svg class="i" style="left:1271px;top:790px;width:8px;height:8px" viewBox="0 0 8 8"><path d="M8 0V8H0A8 8 0 0 0 8 0z" fill="#aaa"/></svg>
</body></html>
